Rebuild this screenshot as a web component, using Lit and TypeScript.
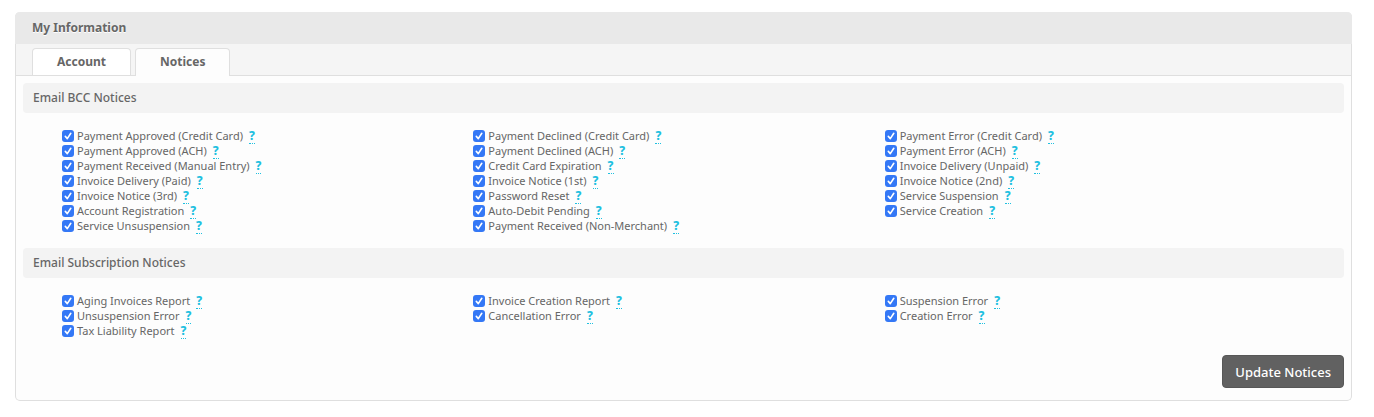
import { LitElement, html, css } from "lit";
import { customElement, property, state } from "lit/decorators.js";

const BCC_NOTICES = [
  "Payment Approved (Credit Card)", "Payment Declined (Credit Card)", "Payment Error (Credit Card)",
  "Payment Approved (ACH)", "Payment Declined (ACH)", "Payment Error (ACH)",
  "Payment Received (Manual Entry)", "Credit Card Expiration", "Invoice Delivery (Unpaid)",
  "Invoice Delivery (Paid)", "Invoice Notice (1st)", "Invoice Notice (2nd)",
  "Invoice Notice (3rd)", "Password Reset", "Service Suspension",
  "Account Registration", "Auto-Debit Pending", "Service Creation",
  "Service Unsuspension", "Payment Received (Non-Merchant)",
];

const SUBSCRIPTION_NOTICES = [
  "Aging Invoices Report", "Invoice Creation Report", "Suspension Error",
  "Unsuspension Error", "Cancellation Error", "Creation Error",
  "Tax Liability Report",
];

@customElement("notice-group")
export class NoticeGroup extends LitElement {
  @property() heading = "";
  @property({ attribute: false }) notices: string[] = [];

  static styles = css`
    :host { display: block; }
    .heading {
      margin: 0;
      padding: 0 10px;
      border-radius: 4px;
      background: #f3f3f3;
      font-size: 12px;
      font-weight: 500;
      line-height: 30px;
    }
    .list {
      display: grid;
      grid-template-columns: repeat(3, 1fr);
      margin: 0;
      padding: 15px 48px 15px 39px;
      list-style: none;
    }
    .item {
      display: flex;
      align-items: center;
      height: 15px;
      font-size: 11px;
      line-height: 15px;
      white-space: nowrap;
    }
    .label { display: flex; align-items: center; gap: 3px; }
    .check {
      appearance: none;
      flex: none;
      width: 12px;
      height: 12px;
      margin: 0;
      border: 1px solid #c4c4c4;
      border-radius: 3px;
      background: #fff;
    }
    .check:checked {
      border: 0;
      background: #3478f6 url("data:image/svg+xml,%3Csvg xmlns='http://www.w3.org/2000/svg' viewBox='0 0 12 12'%3E%3Cpath d='M3.3 6.4l2 2.2 3.5-5.3' fill='none' stroke='white' stroke-width='1.6' stroke-linecap='round' stroke-linejoin='round'/%3E%3C/svg%3E");
    }
    .help {
      margin-left: 6px;
      border-bottom: 1px dotted #1fc0e0;
      color: #1fc0e0;
      font-size: 12px;
      font-weight: 800;
      line-height: 15px;
      text-decoration: none;
    }
  `;

  render() {
    return html`
      <h3 class="heading">${this.heading}</h3>
      <ul class="list">
        ${this.notices.map((name) => html`
          <li class="item">
            <label class="label"><input class="check" type="checkbox" checked />${name}</label>
            <a class="help" href="#" aria-label=${`About ${name}`}>?</a>
          </li>`)}
      </ul>
    `;
  }
}

@customElement("app-root")
export class AppRoot extends LitElement {
  @state() private tab = "Notices";

  static styles = css`
    :host {
      display: block;
      padding: 12px 22px 16px 15px;
      background: #fff;
      color: #666;
      font-family: "Noto Sans", sans-serif;
    }
    .panel {
      border: 1px solid #dfdfdf;
      border-top: 0;
      border-radius: 5px;
      background: #fdfdfd;
    }
    .title {
      margin: 0 -1px;
      padding: 0 17px;
      border-radius: 5px 5px 0 0;
      background: #e9e9e9;
      font-size: 12px;
      font-weight: 700;
      line-height: 32px;
      text-shadow: 0 1px 0 #fff;
    }
    .tabs {
      display: flex;
      gap: 4px;
      padding: 4px 16px 0;
      border-bottom: 1px solid #dfdfdf;
      background: #f5f5f5;
    }
    .tab {
      display: flex;
      height: 27px;
      padding: 0 24px;
      border: 1px solid #dfdfdf;
      border-bottom: 0;
      border-radius: 4px 4px 0 0;
      background: #fff;
      color: #666;
      font: 700 12px/26px "Noto Sans", sans-serif;
    }
    .tab.active { height: 28px; margin-bottom: -1px; background: #fdfdfd; }
    .body { padding: 7px 7px 12px; }
    .actions { display: flex; justify-content: flex-end; padding-top: 2px; }
    .submit {
      height: 33px;
      padding: 0 12px;
      border: 1px solid #575757;
      border-radius: 4px;
      background: #616161;
      color: #fff;
      font: 500 13px/30px "Noto Sans", sans-serif;
    }
  `;

  render() {
    return html`
      <section class="panel">
        <h2 class="title">My Information</h2>
        <div class="tabs" role="tablist">
          ${["Account", "Notices"].map((name) => html`
            <button
              class="tab ${name === this.tab ? "active" : ""}"
              role="tab"
              aria-selected=${name === this.tab}
              @click=${() => (this.tab = name)}
            >${name}</button>`)}
        </div>
        <form class="body" @submit=${(e: Event) => e.preventDefault()}>
          <notice-group heading="Email BCC Notices" .notices=${BCC_NOTICES}></notice-group>
          <notice-group heading="Email Subscription Notices" .notices=${SUBSCRIPTION_NOTICES}></notice-group>
          <div class="actions"><button class="submit">Update Notices</button></div>
        </form>
      </section>
    `;
  }
}
